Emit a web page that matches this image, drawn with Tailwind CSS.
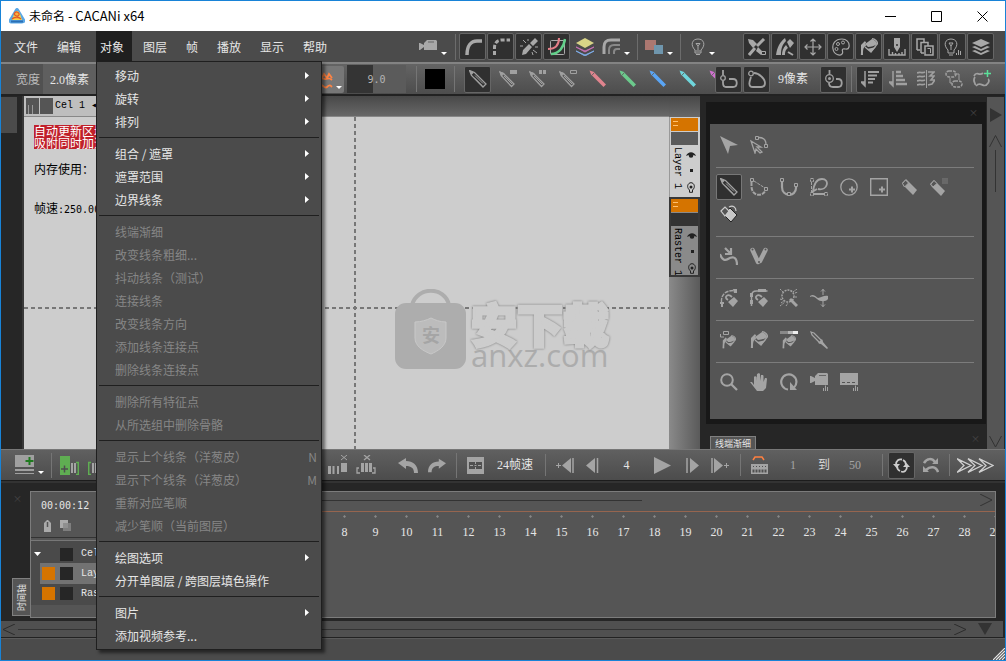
<!DOCTYPE html>
<html lang="zh-CN">
<head>
<meta charset="utf-8">
<title>未命名 - CACANi x64</title>
<script src="https://cdn.jsdelivr.net/npm/@tailwindcss/browser@4"></script>
</head>
<body class="h-screen overflow-hidden font-['Noto_Sans_CJK_SC',sans-serif] text-xs leading-4 text-[#e6e6e6]">

<svg class="hidden">
  <symbol id="pen" viewBox="0 0 18 18"><path d="M.5.5l5 2 11.500 11.500-3 3L2.500 5.500z" fill="none" stroke="currentColor" stroke-width="1.300"/><path d="M.5.5l4.500 2-2.500 2.500z" fill="currentColor"/><path d="M6 5.500l8 8M5 7.500l8 8" stroke="currentColor"/></symbol>
  <symbol id="penmini" viewBox="0 0 18 18"><path d="M1 2l3.500 1.500L15 14l-2.500 2.500L2.500 6z" fill="none" stroke="currentColor" stroke-width="1.300"/><path d="M1 2l4 1.500-2.500 2.500zM5 6l8 8" stroke="currentColor" fill="currentColor"/></symbol>
  <symbol id="crayon" viewBox="0 0 18 18"><path d="M.5.5l4 1.200L17 14.500 14.500 17 4 6.500 2 4.500z" fill="currentColor"/><path d="M5 3L3 5.200" stroke="#666"/></symbol>
  <symbol id="caret" viewBox="0 0 6 3"><path d="M0 0h6L3 3z" fill="#fff"/></symbol>
  <symbol id="camera" viewBox="0 0 18 18"><path d="M0 5h1l4 2V5l3-3h9l1 1v9H5V9l-4 3H0z" fill="currentColor"/><path d="M9 4h6" stroke="#666"/></symbol>
  <symbol id="curve" viewBox="0 0 18 18"><path d="M3 17C3 8 7 3 13 3h5" fill="none" stroke="currentColor" stroke-width="3.500"/></symbol>
  <symbol id="dashcurve" viewBox="0 0 18 18"><path d="M2.500 17V9C3 4 6 2 10 2h8" fill="none" stroke="currentColor" stroke-width="3" stroke-dasharray="4 2"/></symbol>
  <symbol id="snapbrush" viewBox="0 0 18 18"><path d="M15 0l3 3-5 5-3-3zM9 6l3 3-6 7-4 1 1-5z" fill="currentColor"/><path d="M3 2l3 3M0 8h3M13 12l4 3M12 14l1 3M8 1v2M15 9h3" stroke="currentColor"/></symbol>
  <symbol id="twocurves" viewBox="0 0 18 18"><rect x="2.500" y="2.500" width="14" height="14" rx="1" fill="none" stroke="#aaa"/><path d="M0 11C7 11 11 7 11 0" fill="none" stroke="#e57f88" stroke-width="2"/><path d="M3 16C11 16 16 9 17 1" fill="none" stroke="#62d08a" stroke-width="2.500"/></symbol>
  <symbol id="colorstack" viewBox="0 0 18 18"><path d="M0 5l9-5 9 5-9 5z" fill="#d8d487"/><path d="M0 9l9 4 9-4-9 5z" fill="#c070b0" stroke="#c070b0"/><path d="M0 13l9 4 9-4-9 5z" fill="#7da8e0" stroke="#7da8e0"/></symbol>
  <symbol id="arcs" viewBox="0 0 18 18"><path d="M2 16V9c0-5 2-7 7-7h9" fill="none" stroke="currentColor" stroke-width="3"/><path d="M7 16v-4c0-4 2-5 5-5h6M12 16v-2c0-2 1-3 3-3h3" fill="none" stroke="#888" stroke-width="2"/></symbol>
  <symbol id="squares" viewBox="0 0 18 18"><path d="M0 2h11v10H0z" fill="#ac7871"/><path d="M9 7h9v9H9z" fill="#6f96ad"/></symbol>
  <symbol id="bulb" viewBox="0 0 18 18"><path d="M6 12C1 7 3 1 9 1s8 6 3 11v3H6zM7 16.500h4M6.500 13h5M9 12V8M7 5.500h4L9 8z" fill="none" stroke="currentColor"/></symbol>
  <symbol id="pencross" viewBox="0 0 18 18"><path d="M0 1l5 1 4 4-4 4-4-5zM10 9l5 5-2 3-5-4z" fill="currentColor"/><path d="M16 1L9 8M7 10l-6 7" stroke="currentColor" stroke-width="3"/><path d="M13.500 13.500h4v3h-4z" fill="#303030" stroke="currentColor"/></symbol>
  <symbol id="fan" viewBox="0 0 18 18"><path d="M0 17C1 9 4 4 9 0l1 3C6 7 5 11 5 17zM6 17c0-4 1-7 4-10l2 3c-3 2-3 5-3 7zM11 4l3-3 4 4-4 5z" fill="currentColor"/><path d="M12 14l5 3" stroke="currentColor" stroke-width="2"/></symbol>
  <symbol id="move" viewBox="0 0 18 18"><path d="M9 2v14M2 9h14M6.500 3.500L9 1l2.500 2.500M6.500 14.500L9 17l2.500-2.500M3.500 6.500L1 9l2.500 2.500M14.500 6.500L17 9l-2.500 2.500" fill="none" stroke="currentColor" stroke-width="1.200"/></symbol>
  <symbol id="palette" viewBox="0 0 18 18"><path d="M10 1C3 1 0 6 1 11c1 6 7 7 9 5s-1-4 1-5 5 2 6-2c1-5-3-8-7-8z" fill="none" stroke="currentColor" stroke-width="1.200"/><circle cx="6" cy="6" r="1.500" fill="none" stroke="currentColor"/><circle cx="11" cy="4.500" r="1.500" fill="none" stroke="currentColor"/><circle cx="4.500" cy="11" r="1.500" fill="none" stroke="currentColor"/></symbol>
  <symbol id="bucket" viewBox="0 0 18 18"><path d="M5 6l7-5c3 1 5 3 5 5-2 2-6 3-9 3z" fill="currentColor"/><path d="M12 .7c3 0 6 3 5.300 5.300L11 14 5 9M6 4C3 5 1.500 8 1.500 17" fill="none" stroke="currentColor" stroke-width="1.300"/><path d="M5 3L1 7v10h2c0-5 0-8 3-9zM7 11l9-2-5 5z" fill="currentColor"/></symbol>
  <symbol id="bucketcorner" viewBox="0 0 18 18"><use href="#bucket" x="1" y="4" width="16" height="14"/><path d="M3.500.5h5v3h-5zM.5 3v3H4" fill="none" stroke="currentColor"/></symbol>
  <symbol id="bucketgrad" viewBox="0 0 18 18"><path d="M0 0h8v3H0z" fill="#888"/><path d="M8 0h5v3H8z" fill="#b5b5b5"/><path d="M13 0h5v3h-5z" fill="#eee"/><use href="#bucket" x="1" y="4" width="16" height="14"/></symbol>
  <symbol id="marker" viewBox="0 0 18 18"><path d="M6 0h6v9l-3 5-3-5z" fill="currentColor"/><path d="M1 11v6h16v-6M4.500 14v3M7.500 15v2M11 15v2M14 14v3" fill="none" stroke="currentColor" stroke-width="1.400"/><circle cx="9" cy="7" r="1" fill="#303030"/></symbol>
  <symbol id="docs" viewBox="0 0 18 18"><path d="M1 12V1h7v3M1 12h3M5 15V4.500h7V8M5 15h3" fill="none" stroke="currentColor" stroke-width="1.500"/><path d="M9 8h8v9H9z" fill="none" stroke="currentColor" stroke-width="1.500"/><path d="M11.500 10.500h3V15" stroke="currentColor" fill="none"/></symbol>
  <symbol id="bulbbars" viewBox="0 0 18 18"><path d="M4 12C-1 7 1 1 7 1s8 6 3 11v3H4zM5 17h4M7 12V8M5 5h4L7 8z" fill="none" stroke="currentColor"/><path d="M12.500 15v2M14.500 12v5M16.500 13v4" stroke="currentColor"/></symbol>
  <symbol id="stack" viewBox="0 0 18 18"><path d="M0 5l9-4 9 4-9 4zM0 9l3-1 6 3 6-3 3 1-9 4zM0 13l3-1 6 3 6-3 3 1-9 4z" fill="currentColor"/></symbol>
  <symbol id="tilde" viewBox="0 0 18 18"><path d="M4 4l3 3 2-4 3 4 2-4 3 4M3 7c3-2 5 2 8 1s4-1 6 1M1 15c5-6 8 4 11 1s4-1 5 0" fill="none" stroke="#ff8444" stroke-width="1.800"/></symbol>
  <symbol id="loopA" viewBox="0 0 18 18"><path d="M3 0v5M3 11v2c0 3 1 4 3 4h7c5 0 5-8 0-8H9" fill="none" stroke="currentColor" stroke-width="1.800"/><circle cx="3" cy="8" r="2.300" fill="none" stroke="currentColor" stroke-width="1.300"/></symbol>
  <symbol id="loopB" viewBox="0 0 18 18"><path d="M6 3c5 0 11 6 11 10 0 3-2 4-4 4H5c-6 0-3-7-2-10" fill="none" stroke="currentColor" stroke-width="1.800"/><circle cx="3" cy="3.500" r="2.300" fill="none" stroke="currentColor" stroke-width="1.300"/></symbol>
  <symbol id="loopC" viewBox="0 0 18 18"><path d="M4.500 0v4M4 13c0 3 2 4 4 4h5c5 0 5-8 0-8h-2" fill="none" stroke="currentColor" stroke-width="1.800"/><circle cx="4.500" cy="8.500" r="3.800" fill="none" stroke="currentColor" stroke-width="1.300"/><circle cx="4.500" cy="8.500" r="1.500" fill="currentColor"/></symbol>
  <symbol id="sortA" viewBox="0 0 18 18"><path d="M4 1v15L0 12h4" fill="currentColor" stroke="currentColor" stroke-width="1.500"/><path d="M7 2h11M7 5.500h9M7 9h7M7 12.500h5" stroke="currentColor" stroke-width="1.800"/></symbol>
  <symbol id="sortB" viewBox="0 0 18 18"><path d="M4 1v15L0 12h4" fill="currentColor" stroke="currentColor" stroke-width="1.500"/><path d="M7 2h5M7 6h7M7 10h9M7 14h11" stroke="currentColor" stroke-width="2.300"/></symbol>
  <symbol id="mirror" viewBox="0 0 18 18"><path d="M0 3c4-2 4 1 8-1M0 7c4-2 4 1 8-1M0 11c4-2 4 1 8-1M0 15c4-2 4 1 8-1M11 2h6l-4 4h4l-3 4 4 0-3 4 -4 1" fill="none" stroke="currentColor" stroke-width="1.600"/><path d="M9.500 0v18" stroke="currentColor"/></symbol>
  <symbol id="links" viewBox="0 0 18 18"><rect x="1" y="1" width="10" height="6" rx="3" fill="none" stroke="currentColor" stroke-width="1.500" stroke-dasharray="3 1"/><rect x="7" y="11" width="10" height="6" rx="3" fill="none" stroke="currentColor" stroke-width="1.500" stroke-dasharray="3 1"/><path d="M5 8v5h2M9 4h5v6" fill="none" stroke="currentColor"/></symbol>
  <symbol id="flow" viewBox="0 0 18 18"><path d="M1 6c3-6 5 1 9-3M2 7c-3 4 1 6 0 8M3 16c5-6 8 4 12-3M15 13c2-2 0-3 1-4" fill="none" stroke="currentColor" stroke-width="1.800"/><path d="M14.500 0v7M11 3.500h7" stroke="#5be09a" stroke-width="1.500"/></symbol>
  <symbol id="arrow" viewBox="0 0 18 18"><path d="M0 0l18 9-8 1-2 8z" fill="currentColor"/></symbol>
  <symbol id="arrownode" viewBox="0 0 18 18"><path d="M1 5l10 6-4 0 5 5-2 1-4-4-1 4zM9 1.500c5 0 7 2 7 7" fill="none" stroke="currentColor" stroke-width="1.300"/><path d="M5.500.5h3v3h-3zM14.500 8.500h3v3h-3z" fill="#555" stroke="currentColor"/></symbol>
  <symbol id="nodeA" viewBox="0 0 18 18"><path d="M1.500 4v4c0 11 12 11 14 4" fill="none" stroke="currentColor" stroke-width="2" stroke-dasharray="4 1"/><path d="M4 3l11 7" stroke="currentColor" stroke-dasharray="3 1"/><path d="M.5.5h3v3h-3zM14.500 9.500h3v3h-3z" fill="#555" stroke="currentColor"/></symbol>
  <symbol id="nodeU" viewBox="0 0 18 18"><path d="M2 4v5c0 10 14 10 14 1V8" fill="none" stroke="currentColor" stroke-width="2.200"/><path d="M.5.5h3v3h-3zM14.500 5.500h3v3h-3zM7.500 14.500h3v3h-3z" fill="#555" stroke="currentColor"/></symbol>
  <symbol id="nodeD" viewBox="0 0 18 18"><path d="M3 14C4 4 8 1 12 1c8 0 6 12-4 10M2 14l5-3M3 16h12" fill="none" stroke="currentColor" stroke-width="1.800"/><path d="M1.500 4v10M.5.5h3v3h-3zM.5 14.500h3v3h-3zM14.500 14.500h3v3h-3z" fill="none" stroke="currentColor" stroke-dasharray="3 1"/></symbol>
  <symbol id="circleplus" viewBox="0 0 18 18"><circle cx="9" cy="9" r="8.200" fill="none" stroke="currentColor" stroke-width="1.300"/><path d="M12 8.500v6M9 11.500h6" stroke="currentColor" stroke-width="2"/></symbol>
  <symbol id="boxplus" viewBox="0 0 18 18"><path d="M.7.7h16.600v16.600H.7z" fill="none" stroke="currentColor" stroke-width="1.400"/><path d="M12 8.500v6M9 11.500h6" stroke="currentColor" stroke-width="2"/></symbol>
  <symbol id="eraser" viewBox="0 0 18 18"><path d="M2 5l4-4 11 11-4 5L4 8z" fill="currentColor"/><path d="M2.500 5.500L5.500 2l3 3-4 4z" fill="#555" stroke="currentColor"/></symbol>
  <symbol id="eraserdots" viewBox="0 0 18 18"><path d="M0 6l4-4 11 11-4 5L2 9z" fill="currentColor"/><path d="M.8 6.200L4 2.500l3 3L3 9z" fill="#555" stroke="currentColor"/><path d="M12.500 1H18M12.500 3H18M12.500 5H18" stroke="currentColor" stroke-dasharray="1 1"/></symbol>
  <symbol id="erasercap" viewBox="0 0 18 18"><path d="M3 9l7-6 7 7-6 7z" fill="#c8c8c8" stroke="#222"/><path d="M1 6l4-4 4 4-4 5zM9 2c4-2 7 0 7 4" fill="#555" stroke="#ccc" stroke-width="1.200"/></symbol>
  <symbol id="squiggle" viewBox="0 0 18 18"><path d="M0 7c2 6 5 7 8 5s9-4 9 6M5 1l5 5M11 1v6H5" fill="none" stroke="currentColor" stroke-width="2.200"/></symbol>
  <symbol id="vee" viewBox="0 0 18 18"><path d="M2.500 3L8 15M15.500 3L10 14" stroke="currentColor" stroke-width="4.500" stroke-linecap="round"/><circle cx="2.500" cy="2.500" r="1" fill="#555"/><circle cx="15.500" cy="2.500" r="1" fill="#555"/><circle cx="9" cy="15" r="1" fill="#555"/></symbol>
  <symbol id="pinA" viewBox="0 0 18 18"><path d="M1.500 13C1 6 5 1.500 14 1.500" fill="none" stroke="currentColor" stroke-width="1.400" stroke-dasharray="4 1"/><path d="M13 0h4v4h-3zM0 13h4v2H3v3H1v-3H0zM8 13l6-5 4 4-5 6z" fill="currentColor"/><path d="M8 11c-5-3 0-7 4-3" fill="none" stroke="currentColor" stroke-width="1.800"/></symbol>
  <symbol id="pinB" viewBox="0 0 18 18"><path d="M1.500 17V7c0-4 2-5 5-5h11" fill="none" stroke="currentColor" stroke-width="1.500"/><path d="M0 4h3v4H0zM0 11h3v4H0zM8 0h8v3H8zM8 13l6-5 4 4-5 6z" fill="currentColor"/><path d="M8 11c-5-3 0-7 4-3" fill="none" stroke="currentColor" stroke-width="1.800"/></symbol>
  <symbol id="marquee" viewBox="0 0 18 18"><circle cx="8" cy="7" r="6" fill="none" stroke="currentColor" stroke-width="1.500" stroke-dasharray="2 1"/><path d="M0 0l3 3M17 0l-4 3M0 17l5-4M0 10l3 1M15 8h3M6 17l2-3M1 14l3-2M15 4l3-1" stroke="currentColor" stroke-dasharray="2 1"/><path d="M10 10l7 7" stroke="currentColor" stroke-width="3"/></symbol>
  <symbol id="widthtool" viewBox="0 0 18 18"><path d="M0 7c4-3 6 1 8 2 3 0 6-3 10-2v3c-2 3-8 3-11 0-2-2-4-3-7-2z" fill="currentColor"/><path d="M13 0v6M11 2.500L13 .5l2 2M13 12v6M11 15.500l2 2 2-2" fill="none" stroke="currentColor"/></symbol>
  <symbol id="dropper" viewBox="0 0 18 18"><path d="M1 1l3 1 8 8-2 2L2 4z" fill="none" stroke="currentColor" stroke-width="1.300"/><path d="M8 12l4-4 1 3 5 6-1 1-6-5z" fill="currentColor"/></symbol>
  <symbol id="zoom" viewBox="0 0 18 18"><circle cx="7" cy="7" r="5.800" fill="none" stroke="currentColor" stroke-width="2"/><path d="M11 11l6 6" stroke="currentColor" stroke-width="2.300"/></symbol>
  <symbol id="hand" viewBox="0 0 18 18"><path d="M0 9l2 0 2 3V4l1-1 1.500 1v4l.5-7 2-1 1 1v7l1-6 2 0 .5 1v6l1.500-4h1.500l.5 1-1 9-3 3H7z" fill="currentColor"/></symbol>
  <symbol id="rotate" viewBox="0 0 18 18"><path d="M8 16.500A7.600 7.600 0 1 1 14 14.500" fill="none" stroke="currentColor" stroke-width="2.200"/><path d="M10 9v8h7z" fill="currentColor"/></symbol>
  <symbol id="camerabars" viewBox="0 0 18 18"><path d="M0 3h1l4 2V3l3-3h9l1 1v11H5V8l-4 2H0z" fill="currentColor"/><path d="M9 2.500h7" stroke="#666"/><path d="M13.500 15v3M15.500 12.500V18M17.500 14v4" stroke="currentColor"/></symbol>
  <symbol id="screenbars" viewBox="0 0 18 18"><path d="M0 0h18v12H0z" fill="currentColor"/><path d="M2 9.500h14" stroke="#555" stroke-dasharray="3 2"/><path d="M13.500 15v3M15.500 12.500V18M17.500 14v4" stroke="currentColor"/></symbol>
  <symbol id="eye" viewBox="0 0 10 8"><path d="M0 5C2 0 8 0 10 5L5 3z" fill="#222"/><circle cx="5" cy="4.500" r="2.300" fill="#222"/></symbol>
  <symbol id="lamp" viewBox="0 0 8 11"><path d="M2.500 8C-1 5 1 .7 4 .7S9 5 5.500 8v2.300h-3z" fill="none" stroke="#222"/><circle cx="4" cy="5" r="1.500" fill="#222"/></symbol>
</svg>

<div class="flex h-full flex-col border border-[#1883d7] bg-[#262626]">

  <!-- title bar -->
  <header class="flex h-[30px] shrink-0 items-center bg-white pl-2 text-black">
    <svg class="mr-1 size-4" viewBox="0 0 16 16"><path d="M6 1.500c1-2 3-2 4 0l6 10c1 3-1 4-3 4H3c-3 0-4-2-3-4z" fill="#5aa7e6"/><path d="M2 13.500h12" stroke="#2b6fb4" stroke-width="2"/><path d="M5 6c1-4 5-4 6 0l2 6H3z" fill="#f7d24a"/><path d="M5 6c2-4 6-1 5 1s-4 1-5-1zM3 11c3-3 7-2 9 0" fill="#fbb13c" stroke="#e0582a" stroke-width="1.200"/></svg>
    <h1 class="text-[13px]"><span class="text-xs">未命名</span> - CACANi x64</h1>
    <div class="ml-auto flex h-full">
      <button aria-label="最小化" class="flex w-[45px] items-center justify-center"><svg class="size-[11px]" viewBox="0 0 11 11"><path d="M0 5.500h11" stroke="#000"/></svg></button>
      <button aria-label="最大化" class="flex w-[46px] items-center justify-center"><svg class="size-[11px]" viewBox="0 0 11 11"><path d="M.5.5h10v10H.5z" fill="none" stroke="#000"/></svg></button>
      <button aria-label="关闭" class="flex w-[46px] items-center justify-center"><svg class="size-[11px]" viewBox="0 0 11 11"><path d="M.5.5l10 10M10.500.5l-10 10" stroke="#000"/></svg></button>
    </div>
  </header>

  <!-- menu bar and main tools -->
  <div class="flex h-[31px] shrink-0 items-center bg-[#4b4b4b] text-[#a8a8a8]">
    <nav class="flex h-full gap-[7px] pl-[9px] text-[#e6e6e6]">
      <button class="pl-1 pr-2">文件</button><button class="pl-1 pr-2">编辑</button>
      <div class="relative flex">
        <button class="bg-[#1f1f1f] pl-1 pr-2">对象</button>
        <div role="menu" class="absolute left-0 top-[30px] z-20 flex w-[226px] flex-col border border-[#1f1f1f] bg-[#4b4b4b] p-0.5 text-[#e6e6e6] shadow-[3px_3px_3px_rgba(0,0,0,0.5)]" id="menu"></div>
      </div>
      <button class="pl-1 pr-2">图层</button><button class="pl-1 pr-2">帧</button><button class="pl-1 pr-2">播放</button><button class="pl-1 pr-2">显示</button><button class="pl-1 pr-2">帮助</button>
    </nav>
    <div class="ml-auto flex items-center pr-[11px]">
      <button aria-label="摄像机" class="flex w-9 items-end"><svg class="size-[18px]"><use href="#camera"/></svg><svg class="ml-1 mb-px h-[3px] w-1.5"><use href="#caret"/></svg></button>
      <span class="mr-[3px] h-[26px] w-px bg-[#6c6c6c]"></span>
      <div class="mr-px flex gap-px">
        <button aria-label="曲线" class="flex size-[27px] items-center justify-center rounded-xs border border-[#666] bg-[#303030]"><svg class="size-[18px]"><use href="#curve"/></svg></button>
        <button aria-label="虚线" class="flex size-[27px] items-center justify-center rounded-xs border border-[#666] bg-[#303030]"><svg class="size-[18px]"><use href="#dashcurve"/></svg></button>
        <button aria-label="吸附" class="flex size-[27px] items-center justify-center rounded-xs border border-[#666] bg-[#303030]"><svg class="size-[18px]"><use href="#snapbrush"/></svg></button>
        <button aria-label="双线" class="flex size-[27px] items-center justify-center rounded-xs border border-[#666] bg-[#303030]"><svg class="size-[18px]"><use href="#twocurves"/></svg></button>
      </div>
      <button aria-label="图层颜色" class="flex w-7 justify-center"><svg class="size-[18px]"><use href="#colorstack"/></svg></button>
      <button aria-label="洋葱皮" class="flex w-9 items-end pl-[3px]"><svg class="size-[18px]"><use href="#arcs"/></svg><svg class="ml-1 mb-px h-[3px] w-1.5"><use href="#caret"/></svg></button>
      <span class="ml-0.5 mr-[7px] h-[26px] w-px bg-[#6c6c6c]"></span>
      <button aria-label="排列" class="flex w-[35px] items-end"><svg class="size-[18px]"><use href="#squares"/></svg><svg class="ml-1 mb-px h-[3px] w-1.5"><use href="#caret"/></svg></button>
      <span class="mr-2 h-[26px] w-px bg-[#6c6c6c]"></span>
      <button aria-label="灯光" class="flex w-[54px] items-end"><svg class="size-[18px]"><use href="#bulb"/></svg><svg class="ml-0.5 mb-px h-[3px] w-1.5"><use href="#caret"/></svg></button>
      <div class="flex gap-px" id="toggles"></div>
    </div>
  </div>

  <!-- brush options -->
  <div class="flex h-[34px] shrink-0 items-center border-b-2 border-t-2 border-b-[#222] border-t-[#838383] bg-linear-to-b from-[#646464] to-[#4d4d4d] text-[#a0a0a0]">
    <label for="width" class="flex h-full w-[42px] items-center bg-[#515151] pl-[15px] text-[#bbb]">宽度</label>
    <input id="width" value="2.0像素" class="h-full w-[272px] bg-[#5f5f5f] pl-[7px] font-['Liberation_Serif','Noto_Sans_CJK_SC',serif] text-[#e6e6e6]">
    <button aria-label="抖动" class="flex h-[27px] w-[29px] items-end rounded-xs bg-[#777] pb-1"><svg class="size-[18px]"><use href="#tilde"/></svg><svg class="ml-[3px] h-[3px] w-1.5"><use href="#caret"/></svg></button>
    <input aria-label="抖动值" value="9.0" class="ml-[3px] h-7 w-[59px] bg-linear-to-r from-[#343434] from-44% to-[#5b5b5b] to-44% text-center font-['DejaVu_Sans_Mono',monospace] text-[10px] text-[#b5b5b5]">
    <span class="ml-2.5 h-[26px] w-px bg-[#757575]"></span>
    <button aria-label="颜色" class="ml-2 size-5 bg-black"></button>
    <span class="ml-[9px] h-[26px] w-px bg-[#757575]"></span>
    <button aria-label="铅笔" class="ml-[9px] flex size-[27px] items-center justify-center rounded-xs border border-[#666] bg-[#303030]"><svg class="size-[18px]"><use href="#pen"/></svg></button>
    <div class="ml-2 flex w-[217px] shrink-0 gap-3 overflow-hidden">
      <button aria-label="实线笔" class="shrink-0"><svg class="size-[18px]"><use href="#penmini"/><path d="M11 0h7v4h-7z" fill="currentColor"/></svg></button>
      <button aria-label="双线笔" class="shrink-0"><svg class="size-[18px]"><use href="#penmini"/><path d="M10 0h3v4h-3zM14 0h3v4h-3z" fill="currentColor"/></svg></button>
      <button aria-label="空心笔" class="shrink-0"><svg class="size-[18px]"><use href="#penmini"/><path d="M11.500.5h6v3h-6z" fill="none" stroke="currentColor"/></svg></button>
      <button aria-label="红笔" class="shrink-0 text-[#e0848e]"><svg class="size-[18px]"><use href="#crayon"/></svg></button>
      <button aria-label="绿笔" class="shrink-0 text-[#6cca8c]"><svg class="size-[18px]"><use href="#crayon"/></svg></button>
      <button aria-label="蓝笔" class="shrink-0 text-[#5aa5f5]"><svg class="size-[18px]"><use href="#crayon"/></svg></button>
      <button aria-label="青笔" class="shrink-0 text-[#6fd6dc]"><svg class="size-[18px]"><use href="#crayon"/></svg></button>
      <button aria-label="紫笔" class="shrink-0 text-[#d070d0]"><svg class="size-[18px]"><use href="#crayon"/></svg></button>
    </div>
    <button aria-label="封闭" class="-ml-px flex size-[27px] shrink-0 items-center justify-center rounded-xs border border-[#666] bg-[#303030]"><svg class="size-[18px]"><use href="#loopA"/></svg></button>
    <button aria-label="间隙" class="ml-px flex size-[27px] shrink-0 items-center justify-center rounded-xs border border-[#666] bg-[#303030]"><svg class="size-[18px]"><use href="#loopB"/></svg></button>
    <span class="w-[50px] shrink-0 pl-2 font-['Liberation_Serif','Noto_Sans_CJK_SC',serif] text-[#e6e6e6]">9像素</span>
    <button aria-label="中心" class="flex size-[27px] shrink-0 items-center justify-center rounded-xs border border-[#666] bg-[#303030]"><svg class="size-[18px]"><use href="#loopC"/></svg></button>
    <span class="mx-1 h-[26px] w-px bg-[#757575]"></span>
    <button aria-label="排序" class="flex size-[27px] shrink-0 items-center justify-center rounded-xs border border-[#666] bg-[#303030]"><svg class="size-[18px]"><use href="#sortA"/></svg></button>
    <div class="ml-1.5 flex gap-2.5">
      <button aria-label="倒序"><svg class="size-[18px]"><use href="#sortB"/></svg></button>
      <button aria-label="镜像"><svg class="size-[18px]"><use href="#mirror"/></svg></button>
      <button aria-label="链接"><svg class="size-[18px]"><use href="#links"/></svg></button>
      <button aria-label="添加流线"><svg class="size-[18px]"><use href="#flow"/></svg></button>
    </div>
  </div>

  <!-- workspace -->
  <main class="flex min-h-0 flex-1">
    <div class="flex w-[23px] shrink-0 justify-between border-r-2 border-[#383838]"><span class="mt-px h-9 w-4 bg-[#4b4b4b]"></span></div>
    <section class="flex min-w-0 flex-1 flex-col">
      <div class="flex h-[21px] shrink-0 border-b border-[#888] bg-linear-to-b from-[#484848] to-[#686868]">
        <div class="flex w-32 items-center bg-[#bebebe] pl-0.5 text-black">
          <svg class="h-4 w-7" viewBox="0 0 28 16"><path d="M0 0h13v16H0zM14 0h13v16H14z" fill="#555"/><path d="M2.500 7v9M6.500 7v9" stroke="#999"/></svg>
          <span class="ml-px font-['Liberation_Mono',monospace] text-[10px]">Cel 1 ◂</span>
        </div>
      </div>
      <div class="relative flex-1 overflow-hidden bg-[#cdcdcd] text-black">
        <svg class="absolute inset-0 size-full"><path d="M331 0v400M0 191h700" stroke="#777" stroke-width="2" stroke-dasharray="4 3"/></svg>
        <div class="relative pl-2.5 pt-2">
          <p class="w-fit bg-[#c0202a] leading-3 text-white">自动更新区域<br>吸附同时加速</p>
          <p class="mt-3">内存使用：</p>
          <p class="mt-[23px]">帧速<span class="font-['DejaVu_Sans_Mono',monospace] text-[10px]">:250.00</span></p>
        </div>
        <!-- site mark over the canvas -->
        <div class="absolute left-[371px] top-[172px] flex items-start">
          <svg class="h-[81px] w-[71px]" viewBox="0 0 71 81"><path d="M17 16C22-3 50-3 54 16" fill="none" stroke="#adadad" stroke-width="4"/><rect y="14" width="71" height="66" rx="11" fill="#adadad"/><path d="M20 33c6 0 12-2 16-4 4 2 9 4 15 4v16c0 8-8 13-15 16-8-3-16-8-16-16z" fill="#bcbcbc" stroke="#c8c8c8"/><text x="27" y="53" font-size="18" font-weight="700" fill="#a5a5a5">安</text></svg>
          <div class="ml-[5px] pt-[13px]">
            <p class="text-[46px] font-black leading-10 text-[#cdcdcd] drop-shadow-[0_0_1px_#777] [-webkit-text-stroke:3px_#cdcdcd]">安下载</p>
            <p class="font-['Open_Sans',sans-serif] text-[31px] leading-[26px] text-[#acacac]">anxz.com</p>
          </div>
        </div>
      </div>
    </section>

    <!-- layer strip -->
    <aside class="flex w-[31px] shrink-0 flex-col bg-linear-to-r from-[#8a8a8a] to-[#5a5a5a]">
      <div class="h-[21px] bg-linear-to-b from-[#484848] to-[#686868]"></div>
      <div class="flex h-20 flex-col border-l border-[#999] bg-[#cdcdcd] p-px pr-0.5 text-black">
        <svg class="h-[13px] w-full bg-[#d57400]"><path d="M2 3.500h5M2 7.500h5" stroke="#ffc070"/></svg>
        <span class="mt-px h-[13px] bg-[#5a5a5a]"></span>
        <div class="flex flex-1 justify-between pr-0.5 pt-0.5">
          <span class="h-12 whitespace-nowrap font-['Liberation_Mono',monospace] text-[10px] leading-3 [writing-mode:vertical-rl]">Layer 1</span>
          <div class="flex flex-col items-center gap-2.5 pt-1"><svg class="h-2 w-2.5"><use href="#eye"/></svg><span class="size-[3px] bg-[#222]"></span><svg class="h-[11px] w-2"><use href="#lamp"/></svg></div>
        </div>
      </div>
      <div class="flex h-20 flex-col border-2 border-[#383838] bg-[#8a8a8a] text-black">
        <svg class="h-[13px] w-full bg-[#d57400]"><path d="M2 3.500h5M2 7.500h5" stroke="#ffc070"/></svg>
        <span class="mt-px h-[13px] bg-[#333]"></span>
        <div class="flex flex-1 justify-between overflow-hidden pr-px pt-0.5">
          <span class="h-12 whitespace-nowrap font-['Liberation_Mono',monospace] text-[10px] leading-3 [writing-mode:vertical-rl]">Raster 1</span>
          <div class="flex flex-col items-center gap-2.5 pt-1"><svg class="h-2 w-2.5"><use href="#eye"/></svg><span class="size-[3px] bg-[#222]"></span><svg class="h-[11px] w-2"><use href="#lamp"/></svg></div>
        </div>
      </div>
    </aside>

    <!-- tool palette -->
    <aside class="flex w-[287px] shrink-0 flex-col pl-[6px] pr-px pt-1.5">
      <div class="flex flex-1 flex-col bg-[#181818] px-1 pb-[5px]">
        <button aria-label="关闭工具" class="h-[22px] self-end px-1 text-[9px] text-[#484848]">×</button>
        <div class="flex-1 bg-[#555] px-1.5 pt-0.5 text-[#a4a4a4]" id="tools"></div>
      </div>
      <div class="flex h-[25px] items-end justify-between pl-1 pt-3">
        <button class="h-[13px] w-[46px] overflow-hidden border border-b-0 border-[#808080] bg-[#555] text-[9px] leading-[14px]">线端渐细</button>
        <span class="mb-1 pr-1.5 text-[9px] leading-3 text-[#484848]">×</span>
      </div>
    </aside>
    <div class="mr-px mt-px flex w-[17px] shrink-0 flex-col items-center bg-[#555]">
      <svg class="mt-2.5 h-4 w-3" viewBox="0 0 12 16"><path d="M0 1l12 7-12 7z" fill="#333"/></svg>
      <svg class="mt-3 h-[57px] w-[13px]" viewBox="0 0 13 57"><path d="M.5 12L6.500.5l6 11.500M6.500 15v42" fill="none" stroke="#333"/></svg>
      <svg class="mb-px mt-auto h-3 w-[13px]" viewBox="0 0 13 12"><path d="M.5 0l6 11 6-11" fill="none" stroke="#333"/></svg>
    </div>
  </main>

  <!-- playback bar -->
  <div class="flex h-8 shrink-0 items-center border-b border-t border-b-[#1c1c1c] border-t-[#777] bg-linear-to-b from-[#606060] to-[#4c4c4c] pl-[14px] font-['Liberation_Serif','Noto_Sans_CJK_SC',serif] text-[#a4a4a4]">
    <button aria-label="新建层" class="flex items-end"><svg class="h-5 w-[19px]" viewBox="0 0 19 20"><path d="M0 0h19v12H0zM0 14h19v2H0zM0 18h19v1H0z" fill="#a0a0a0"/><path d="M14.500 2v8M10.500 6h8" stroke="#1f7a1f" stroke-width="2"/></svg><svg class="ml-1 mb-px h-[3px] w-1.5"><use href="#caret"/></svg></button>
    <span class="ml-[7px] h-[25px] w-px bg-[#757575]"></span>
    <button aria-label="添加帧" class="ml-2"><svg class="h-[19px] w-[19px]" viewBox="0 0 19 19"><path d="M0 0h10v19H0z" fill="#5fae52"/><path d="M1 13h7M4.500 9.500v7" stroke="#4e4e4e" stroke-width="1.500"/><path d="M16 6.500h2.300v12H16" fill="none" stroke="#5fae52" stroke-width="1.500"/><path d="M12 7v10M15 7v10" stroke="#a4a4a4" stroke-width="2"/></svg></button>
    <button aria-label="插入帧" class="ml-[9px]"><svg class="h-[19px] w-[19px]" viewBox="0 0 19 19"><path d="M3 6.500H.7v12H3" fill="none" stroke="#5fae52" stroke-width="1.500"/><path d="M5 7v10M8 7v10M11 7v10" stroke="#a4a4a4" stroke-width="2"/></svg></button>
    <button aria-label="删除帧" class="ml-[221px]"><svg class="h-5 w-5" viewBox="0 0 20 20"><path d="M0 11h3v8H0zM4.500 11h2v8h-2zM9 11h2v8H9zM13 8h6v9h-6z" fill="currentColor"/><path d="M13 0l6 5M19 0l-6 5" stroke="currentColor"/></svg></button>
    <button aria-label="删除空帧" class="ml-2"><svg class="h-5 w-5" viewBox="0 0 20 20"><path d="M5 8h3v9H5zM9 8h3v9H9zM13 8h3v9h-3z" fill="currentColor"/><path d="M3 13H1v5h3M17 13h2v5h-3M8 0l6 5M14 0L8 5" fill="none" stroke="currentColor" stroke-width="1.300"/></svg></button>
    <button aria-label="撤销" class="ml-[22px]"><svg class="h-[15px] w-5" viewBox="0 0 20 15"><path d="M0 5l8-5v3c7 0 12 4 12 12h-4c0-5-3-7-8-7v3z" fill="currentColor"/></svg></button>
    <button aria-label="重做" class="ml-2.5"><svg class="h-[15px] w-[18px]" viewBox="0 0 20 15"><path d="M20 5l-8-5v3C5 3 0 7 0 15h4c0-5 3-7 8-7v3z" fill="currentColor"/></svg></button>
    <span class="ml-2.5 h-[25px] w-px bg-[#757575]"></span>
    <button aria-label="帧率" class="ml-2.5"><svg class="size-[17px]" viewBox="0 0 17 17"><path d="M0 0h17v17H0z" fill="#a4a4a4"/><path d="M2 5h13v7H2z" fill="#505050"/><path d="M8.500 2v5M8.500 10v5M3 8.500h3M7.500 8.500h2M11 8.500h3" stroke="#a4a4a4"/></svg></button>
    <span class="ml-[13px] w-12 text-[#e6e6e6]">24帧速</span>
    <span class="h-[22px] w-px bg-[#757575]"></span>
    <button aria-label="首帧" class="ml-2.5"><svg class="h-[15px] w-[18px]" viewBox="0 0 18 15"><path d="M15 0v15L6 7.500z" fill="currentColor"/><path d="M0 7.500h5M2.500 5v5" stroke="currentColor"/><path d="M17 0v15" stroke="currentColor" stroke-width="1.500"/></svg></button>
    <button aria-label="上一帧" class="ml-3"><svg class="h-[15px] w-[13px]" viewBox="0 0 13 15"><path d="M9 0v15L0 7.500z" fill="currentColor"/><path d="M11.500 0v15" stroke="currentColor" stroke-width="1.500"/></svg></button>
    <input aria-label="当前帧" value="4" class="w-[55px] bg-transparent text-center text-[#e6e6e6]">
    <button aria-label="播放"><svg class="h-[17px] w-[17px]" viewBox="0 0 17 17"><path d="M0 0l17 8.500L0 17z" fill="currentColor"/></svg></button>
    <button aria-label="下一帧" class="ml-[15px]"><svg class="h-[15px] w-[13px]" viewBox="0 0 13 15"><path d="M4 0v15l9-7.500z" fill="currentColor"/><path d="M1 0v15" stroke="currentColor" stroke-width="1.500"/></svg></button>
    <button aria-label="末帧" class="ml-3"><svg class="h-[15px] w-[18px]" viewBox="0 0 18 15"><path d="M3 0v15l9-7.500z" fill="currentColor"/><path d="M18 7.500h-5M15.500 5v5" stroke="currentColor"/><path d="M1 0v15" stroke="currentColor" stroke-width="1.500"/></svg></button>
    <span class="ml-[11px] h-[22px] w-px bg-[#757575]"></span>
    <button aria-label="范围" class="ml-2.5"><svg class="h-[18px] w-[17px]" viewBox="0 0 17 18"><path d="M2 4L4 1h7l2 3" fill="none" stroke="#ff8040" stroke-width="1.500"/><path d="M0 8h17v10H0z" fill="#a4a4a4"/><path d="M2 10.500h13" stroke="#505050" stroke-dasharray="1 2"/><path d="M1.500 15h14" stroke="#505050" stroke-dasharray="2 1" stroke-width="3"/></svg></button>
    <input aria-label="起始" value="1" class="w-[50px] bg-transparent text-center">
    <span class="text-[#d8d8d8]">到</span>
    <input aria-label="结束" value="50" class="mr-0.5 w-[50px] bg-transparent text-center">
    <span class="h-[22px] w-px bg-[#757575]"></span>
    <button aria-label="循环" class="ml-[5px] flex size-[27px] shrink-0 items-center justify-center rounded-xs border border-[#666] bg-[#303030]"><svg class="size-[17px]" viewBox="0 0 17 17"><path d="M3 8C3 3 6 2 9 2.500M14 9c0 5-3 6.500-6 5.500M4 9c0 3 1 4 3 5M13 8c0-3-1-4-3-5" fill="none" stroke="#ccc" stroke-width="1.800"/><path d="M0 7h7L3.500 11zM10 10h7l-3.500-4z" fill="#ccc"/></svg></button>
    <button aria-label="往返" class="ml-2 shrink-0"><svg class="size-4" viewBox="0 0 16 16"><path d="M1 6c3-5 8-5 11-1M15 15c-2-6-8-6-12-2" fill="none" stroke="currentColor" stroke-width="2.500"/><path d="M15 1v6H9zM0 9v6h6z" fill="currentColor"/></svg></button>
    <span class="ml-2.5 h-[22px] w-px bg-[#757575]"></span>
    <button aria-label="快进" class="ml-[7px] shrink-0"><svg class="h-[15px] w-[37px]" viewBox="0 0 37 15"><path d="M0 .7l14 6.800L0 14.300l7-6.800zM11 .7l14 6.800-14 6.800 7-6.800zM22 .7l14 6.800-14 6.800 7-6.800z" fill="#505050" stroke="#d0d0d0" stroke-width="1.300"/></svg></button>
  </div>

  <!-- timeline -->
  <section class="flex h-[140px] shrink-0 border-t-2 border-[#333] pb-[3px] pr-[9px] pt-2">
    <div class="flex w-[29px] shrink-0 flex-col items-end justify-between">
      <span class="pr-2 text-[9px] leading-4 text-[#484848]">×</span>
      <button class="mb-0.5 h-[38px] w-[18px] border border-r-0 border-[#808080] bg-[#555] text-[9px] leading-4 text-[#e6e6e6] [writing-mode:sideways-lr]">时间轴</button>
    </div>
    <div class="flex min-w-0 flex-1 border border-[#7c7c7c] bg-[#555]">
      <div class="w-[81px] shrink-0">
        <div class="h-[46px] border-b border-[#333] pl-2.5 pt-1.5">
          <time class="block font-['DejaVu_Sans_Mono',monospace] text-[10px]">00:00:12</time>
          <svg class="ml-[3px] mt-1.5 h-3 w-8" viewBox="0 0 32 12"><path d="M0 12V3l3-3h1l3 3v9z" fill="#aaa"/><path d="M3.500 2v5" stroke="#555" stroke-width="1.500"/><path d="M16 0h8v8h-8z" fill="#aaa"/><path d="M19 3h8v8h-8z" fill="#888" fill-opacity=".8"/></svg>
        </div>
        <div class="mt-0.5 border-t border-[#777] bg-[#4a4a4a] pl-px pb-0.5 font-['Liberation_Mono',monospace] text-[10px]">
          <div class="flex h-[22px] items-center pl-[2px] pt-1"><svg class="h-1 w-[7px] shrink-0" viewBox="0 0 6 3" preserveAspectRatio="none"><path d="M0 0h6L3 3z" fill="#fff"/></svg><span class="ml-[19px] size-[13px] shrink-0 bg-[#262626]"></span><span class="ml-2 whitespace-nowrap">Cel 1</span></div>
          <div class="ml-2 flex h-[21px] items-center bg-[#727272] pl-0.5"><span class="size-[13px] shrink-0 bg-[#d57400]"></span><span class="ml-[5px] size-[13px] shrink-0 bg-[#262626]"></span><span class="ml-2 whitespace-nowrap">Layer 1</span></div>
          <div class="ml-2 flex h-[19px] items-center pl-0.5"><span class="size-[13px] shrink-0 bg-[#d57400]"></span><span class="ml-[5px] size-[13px] shrink-0 bg-[#262626]"></span><span class="ml-2 whitespace-nowrap">Raster</span></div>
        </div>
      </div>
      <div class="min-w-0 flex-1">
        <div class="flex h-5 items-center justify-between border-b border-[#96654f]"><span class="mb-0.5 h-px w-[530px] bg-[#333]"></span><svg class="mb-1 mr-[3px] h-3 w-3" viewBox="0 0 12 12"><path d="M0 0l12 6-12 6" fill="none" stroke="#333"/></svg></div>
        <ol id="frames" class="flex overflow-hidden font-['Liberation_Serif',serif] text-xs"></ol>
      </div>
    </div>
  </section>

  <!-- horizontal scroll and status -->
  <div class="mr-0.5 flex h-[17px] shrink-0 items-center border-b border-[#222] bg-[#505050] pl-0.5 pr-[11px]">
    <svg class="h-[11px] w-3" viewBox="0 0 12 11"><path d="M12 0L0 5.500 12 11" fill="none" stroke="#2c2c2c"/></svg>
    <span class="mx-[3px] h-px flex-1 bg-[#333]"></span>
    <svg class="h-[11px] w-3" viewBox="0 0 12 11"><path d="M0 0l12 5.500L0 11" fill="none" stroke="#2c2c2c"/></svg>
    <svg class="ml-3 h-3 w-[14px]" viewBox="0 0 14 12"><path d="M0 0h14L7 12z" fill="#333"/></svg>
  </div>
  <footer class="flex h-[22px] shrink-0 items-end justify-end border-t border-[#5a5a5a] bg-[#4b4b4b]"><svg class="size-3" viewBox="0 0 12 12"><path d="M0 12L12 0M3 12l9-9M6 12l6-6M9 12l3-3" stroke="#e8e8e8" stroke-width="1.200"/></svg></footer>
</div>

<script>
  // menu entries: [label, enabled, submenu, shortcut]; null draws a separator
  const items = [['移动',1,1],['旋转',1,1],['排列',1,1],null,['组合 / 遮罩',1,1],['遮罩范围',1,1],['边界线条',1,1],null,
    ['线端渐细'],['改变线条粗细...'],['抖动线条（测试）'],['连接线条'],['改变线条方向'],['添加线条连接点'],['删除线条连接点'],null,
    ['删除所有特征点'],['从所选组中删除骨骼'],null,
    ['显示上个线条（洋葱皮）',0,0,'N'],['显示下个线条（洋葱皮）',0,0,'M'],['重新对应笔顺'],['减少笔顺（当前图层）'],null,
    ['绘图选项',1,1],['分开单图层 / 跨图层填色操作',1],null,['图片',1,1],['添加视频参考...',1]];
  document.getElementById('menu').innerHTML = items.map(i => !i
    ? '<hr class="my-1 border-t border-[#1f1f1f]">'
    : `<button role="menuitem" ${i[1] ? '' : 'disabled'} class="flex h-[23px] items-center justify-between whitespace-nowrap pl-4 pr-0.5 disabled:text-[#868686]"><span>${i[0]}</span>${i[2] ? '<svg class="mr-2 h-[7px] w-1" viewBox="0 0 4 7"><path d="M0 0l4 3.500L0 7z" fill="#fff"/></svg>' : ''}${i[3] ? `<span>${i[3]}</span>` : ''}</button>`).join('');

  document.getElementById('toggles').innerHTML = ['pencross','fan','move','palette','bucket','marker','docs','bulbbars','stack']
    .map(n => `<button aria-label="${n}" class="flex size-[27px] items-center justify-center rounded-xs border border-[#666] bg-[#303030]"><svg class="size-[18px]"><use href="#${n}"/></svg></button>`).join('');

  const groups = [['arrow','arrownode'],['pen','nodeA','nodeU','nodeD','circleplus','boxplus','eraser','eraserdots','erasercap'],
    ['squiggle','vee'],['pinA','pinB','marquee','widthtool'],['bucketcorner','bucket','bucketgrad','dropper'],
    ['zoom','hand','rotate','camerabars','screenbars']];
  document.getElementById('tools').innerHTML = groups.map(g =>
    `<div class="mr-0.5 flex flex-wrap gap-x-1 gap-y-px border-b border-[#7c7c7c] pb-[9px] pt-1.5 last:border-0">${g.map(n =>
      `<button aria-label="${n}" class="flex size-[26px] items-center justify-center rounded-xs ${n === 'pen' ? 'border border-[#777] bg-[#303030]' : ''}"><svg class="size-[18px]"><use href="#${n}"/></svg></button>`).join('')}</div>`).join('');

  document.getElementById('frames').innerHTML = Array.from({length: 29}, (_, i) =>
    `<li class="flex w-[31px] shrink-0 flex-col items-center gap-1.5 pt-[3px]"><svg class="size-[3px]" viewBox="0 0 3 3"><path d="M1.500 0L3 1.500 1.500 3 0 1.500z" fill="#888"/></svg><span>${i + 1}</span></li>`).join('');
</script>
</body>
</html>
